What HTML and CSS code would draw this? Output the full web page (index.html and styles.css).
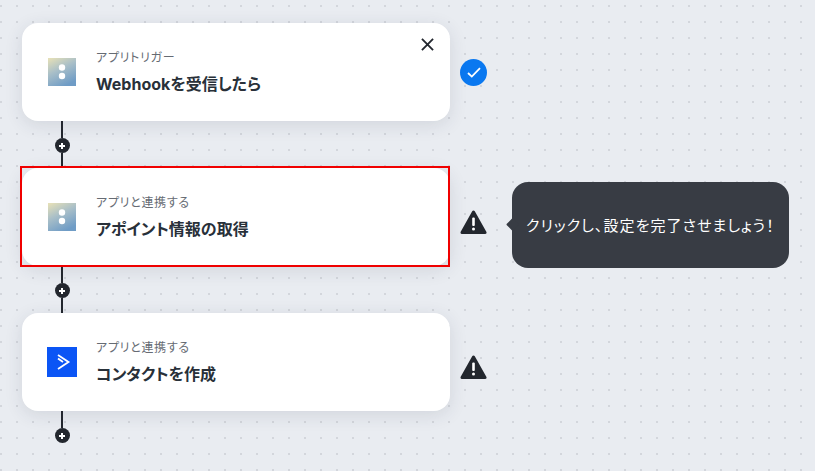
FILE: index.html
```html
<!DOCTYPE html>
<html lang="ja">
<head>
  <meta charset="UTF-8" />
  <meta name="viewport" content="width=device-width, initial-scale=1.0"/>
  <title>Flow</title>
  <link rel="stylesheet" href="styles.css">
</head>
<body>
  <div class="flow">
    <div class="step">
      <div class="card">
        <svg class="app-icon" viewBox="0 0 28 28"><use href="#webhook"/></svg>
        <div class="card-text">
          <div class="card-label">アプリトリガー</div>
          <div class="card-title">Webhookを受信したら</div>
        </div>
        <svg class="close" viewBox="0 0 14 14"><path d="M1 1l12 12M13 1L1 13"/></svg>
      </div>
      <svg class="status status-ok" viewBox="0 0 27 27">
        <circle cx="13.5" cy="13.5" r="13.5" fill="#0a78f0"/>
        <path d="M8 14l3.8 3.6L20 9.2" fill="none" stroke="#fff" stroke-width="1.8"/>
      </svg>
    </div>
    <div class="connector"><span class="line"></span><span class="plus"></span><span class="line"></span></div>

    <div class="step">
      <div class="card card-selected">
        <svg class="app-icon" viewBox="0 0 28 28"><use href="#webhook"/></svg>
        <div class="card-text">
          <div class="card-label">アプリと連携する</div>
          <div class="card-title">アポイント情報の取得</div>
        </div>
      </div>
      <svg class="status status-warn" viewBox="0 0 27 25"><use href="#warn"/></svg>
      <div class="tooltip">クリックし、設定を完了させましょう！</div>
    </div>
    <div class="connector"><span class="line"></span><span class="plus"></span><span class="line"></span></div>

    <div class="step">
      <div class="card">
        <svg class="app-icon app-icon-large" viewBox="0 0 30 30">
          <rect width="30" height="30" fill="#0b55f5"/>
          <path d="M11 8L21.5 15 11 22M11 11.5L16 15" fill="none" stroke="#fff" stroke-width="1.8"/>
        </svg>
        <div class="card-text">
          <div class="card-label">アプリと連携する</div>
          <div class="card-title">コンタクトを作成</div>
        </div>
      </div>
      <svg class="status status-warn" viewBox="0 0 27 25"><use href="#warn"/></svg>
    </div>
    <div class="connector"><span class="line"></span><span class="plus"></span></div>
  </div>

  <svg class="defs" width="0" height="0">
    <defs>
      <linearGradient id="hookFill" x1="0.1" y1="0" x2="0.6" y2="1">
        <stop offset="0" stop-color="#e4dfb8"/>
        <stop offset="0.45" stop-color="#a9bfc8"/>
        <stop offset="1" stop-color="#6f9cc6"/>
      </linearGradient>
      <symbol id="webhook" viewBox="0 0 28 28">
        <rect width="28" height="28" fill="url(#hookFill)"/>
        <circle cx="14" cy="9.5" r="3.2" fill="#fff"/>
        <circle cx="14" cy="18" r="3.2" fill="#fff"/>
      </symbol>
      <symbol id="warn" viewBox="0 0 27 25">
        <path d="M13.5 2L25 22.5H2Z" fill="#23272e" stroke="#23272e" stroke-width="3" stroke-linejoin="round"/>
        <rect x="12.2" y="7.5" width="2.6" height="8.5" rx="1" fill="#fff"/>
        <circle cx="13.5" cy="19" r="1.5" fill="#fff"/>
      </symbol>
    </defs>
  </svg>
</body>
</html>
```

FILE: styles.css
```css
* {
  box-sizing: border-box;
}

html, body {
  height: 100%;
}

body {
  margin: 0;
  overflow: hidden;
  font-family: Inter, "Noto Sans CJK JP", sans-serif;
  font-feature-settings: "palt";
  background-color: #e9ecf1;
  background-image: radial-gradient(circle, #d3d6dc 1.4px, transparent 1.4px);
  background-size: 16px 16px;
  background-position: -7px -2px;
}

.flow {
  padding: 23px 0 0 22px;
}

.step {
  position: relative;
  display: flex;
  align-items: center;
  height: 98px;
}

.card {
  display: flex;
  align-items: center;
  position: relative;
  width: 428px;
  height: 98px;
  padding-left: 26px;
  background: #fff;
  border-radius: 16px;
  box-shadow: 0 4px 18px rgba(40, 50, 70, 0.12);
}

.card-selected::after {
  content: "";
  position: absolute;
  left: -2px;
  top: -2px;
  right: 0;
  bottom: -1px;
  border: 2px solid #f00000;
}

.app-icon {
  width: 28px;
  height: 28px;
  flex-shrink: 0;
}

.app-icon-large {
  width: 30px;
  height: 30px;
  margin: 0 -1px;
}

.card-text {
  margin-left: 20px;
  margin-top: 1px;
}

.card-label {
  font-size: 12px;
  line-height: 16px;
  letter-spacing: 0.7px;
  color: #666b73;
}

.card-title {
  margin-top: 7px;
  font-size: 16px;
  line-height: 22px;
  font-weight: 700;
  color: #283039;
}

.close {
  position: absolute;
  top: 15px;
  right: 16px;
  width: 13px;
  height: 13px;
  fill: none;
  stroke: #23272e;
  stroke-width: 2;
}

.status {
  margin-left: 10px;
  flex-shrink: 0;
}

.status-ok {
  width: 27px;
  height: 27px;
}

.status-warn {
  width: 27px;
  height: 25px;
  margin-top: 11px;
}

.tooltip {
  position: absolute;
  left: 490px;
  top: 14px;
  width: 277px;
  height: 86px;
  display: flex;
  align-items: center;
  padding: 0 0 2px 14px;
  background: #383c44;
  border-radius: 16px;
  color: #fff;
  font-size: 15px;
  letter-spacing: 1.05px;
  font-weight: 400;
  white-space: nowrap;
}

.tooltip::before {
  content: "";
  position: absolute;
  left: -4px;
  top: 38px;
  width: 9px;
  height: 9px;
  background: #383c44;
  border-radius: 1px;
  transform: rotate(45deg);
}

.connector {
  display: flex;
  flex-direction: column;
  align-items: center;
  width: 16px;
  height: 47px;
  margin-left: 32px;
}

.line {
  width: 2px;
  height: 15px;
  background: #23272e;
}

.line:first-child {
  height: 17px;
}

.plus {
  position: relative;
  width: 15px;
  height: 15px;
  flex-shrink: 0;
  border-radius: 50%;
  background: #23272e;
}

.plus::before,
.plus::after {
  content: "";
  position: absolute;
  background: #fff;
}

.plus::before {
  left: 4.5px;
  top: 6.5px;
  width: 6px;
  height: 2px;
}

.plus::after {
  left: 6.5px;
  top: 4.5px;
  width: 2px;
  height: 6px;
}

.defs {
  position: absolute;
}
```
